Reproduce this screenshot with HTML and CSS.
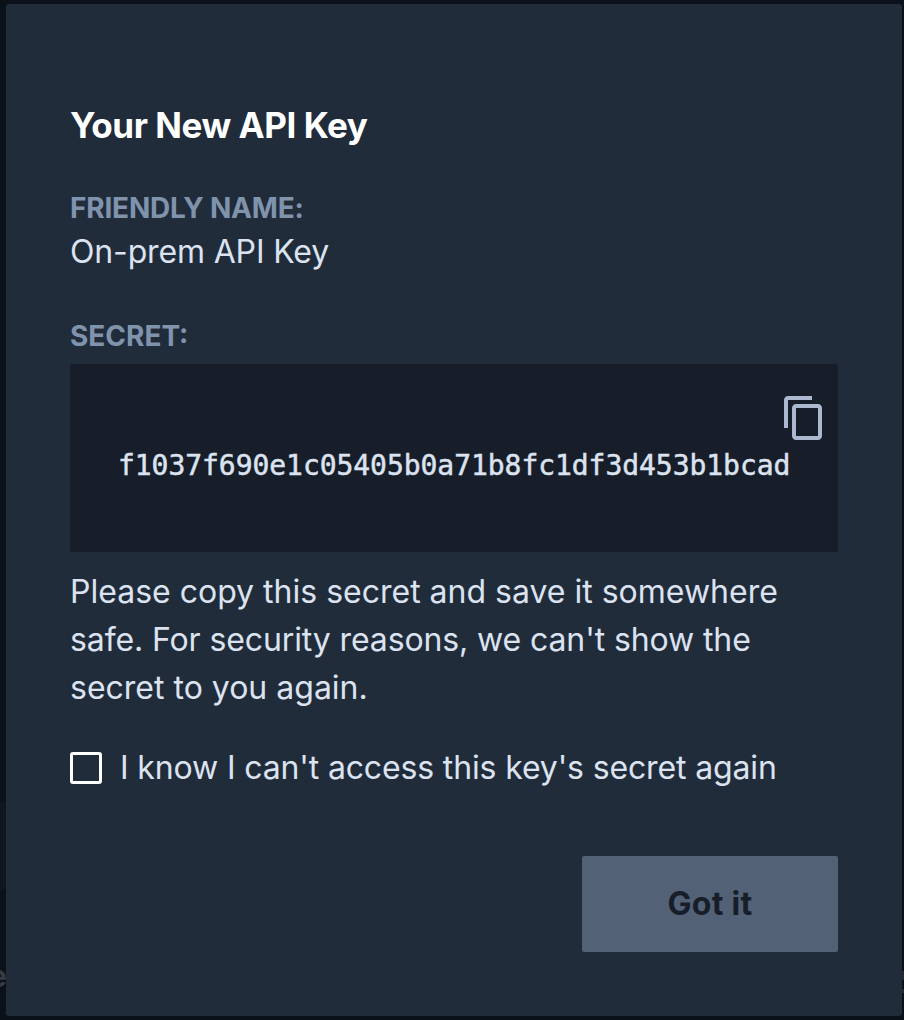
FILE: index.html
```html
<!DOCTYPE html>
<html lang="en">
<head>
<meta charset="utf-8">
<title>Your New API Key</title>
<link rel="stylesheet" href="styles.css">
</head>
<body>
<div class="page-panel"></div>
<span class="page-text">e</span>
<span class="page-mark"></span>
<main class="modal">
  <h1 class="title">Your New API Key</h1>
  <h2 class="label">FRIENDLY NAME:</h2>
  <p class="name">On-prem API Key</p>
  <h2 class="label label-secret">SECRET:</h2>
  <div class="secret">
    <code class="key">f1037f690e1c05405b0a71b8fc1df3d453b1bcad</code>
    <svg class="copy" width="48" height="48" viewBox="0 0 24 24" fill="currentColor"><path d="M16 1H4c-1.100 0-2 .9-2 2v14h2V3h12V1zm3 4H8c-1.100 0-2 .9-2 2v14c0 1.100.9 2 2 2h11c1.100 0 2-.9 2-2V7c0-1.100-.9-2-2-2zm0 16H8V7h11v14z"/></svg>
  </div>
  <p class="notice">Please copy this secret and save it somewhere<br><span class="tight">safe. For security reasons, we can't show the</span><br>secret to you again.</p>
  <label class="confirm"><span class="box"></span><span class="confirm-text">I know I can't access this key's secret again</span></label>
  <div class="actions"><button class="button" type="button">Got it</button></div>
</main>
</body>
</html>
```

FILE: styles.css
```css
* { box-sizing: border-box; }
body { position: relative; margin: 0; height: 1020px; overflow: hidden; padding: 4px 2px 4px 6px; background: #0a1119; font-family: Inter, sans-serif; color: #dce3f0; }
.page-panel { position: absolute; left: 0; top: 802px; width: 6px; height: 88px; background: #0e161f; }
.page-text { position: absolute; left: -11px; top: 958px; font-size: 30px; line-height: 36px; font-weight: 700; color: #373b41; }
.page-mark { position: absolute; right: 0; top: 971px; width: 2px; height: 22px; border: solid #25292e; border-width: 9px 0 4px; }
.modal { position: relative; height: 1012px; padding: 98px 64px 64px; background: #212c3b; border-radius: 3px; }
h1, h2, p { margin: 0; }
.title { margin-top: -1px; font-size: 35px; line-height: 48px; font-weight: 700; letter-spacing: -0.45px; color: #fff; }
.label { margin-top: 41px; font-size: 28px; line-height: 36px; font-weight: 700; letter-spacing: -0.2px; color: #8093ad; }
.name { margin-top: 2px; font-size: 32px; line-height: 48px; letter-spacing: -0.15px; }
.label-secret { margin-top: 42px; letter-spacing: 0; }
.secret { position: relative; height: 188px; margin-top: 10px; padding: 78px 48px 0; background: #171e29; border-radius: 2px; }
.key { display: block; font: 28px/48px "DejaVu Sans Mono", monospace; letter-spacing: -0.05px; white-space: nowrap; -webkit-text-stroke: 0.5px currentColor; }
.copy { position: absolute; top: 30px; right: 10px; color: #abb8cf; }
.notice { margin-top: 16px; font-size: 32px; line-height: 48px; white-space: nowrap; }
.tight { letter-spacing: -0.11px; }
.confirm { display: flex; align-items: center; gap: 18px; height: 48px; margin-top: 32px; font-size: 32px; letter-spacing: -0.14px; white-space: nowrap; }
.confirm-text { padding-bottom: 2px; }
.box { width: 32px; height: 32px; border: 3px solid #fff; border-radius: 3px; }
.actions { display: flex; justify-content: flex-end; margin-top: 64px; }
.button { width: 256px; height: 96px; padding: 0; border: 0; border-radius: 2px; background: #526176; color: #171e29; font: 700 32px/48px Inter, sans-serif; letter-spacing: 0.3px; }
```
